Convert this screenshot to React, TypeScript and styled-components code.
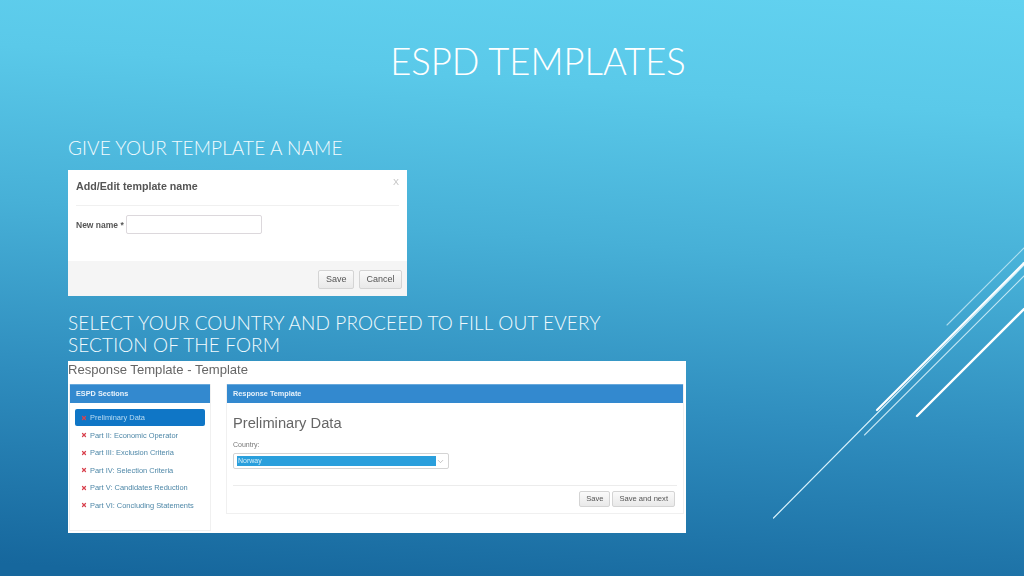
import React from "react";
import styled, { createGlobalStyle } from "styled-components";
import { ChevronDown, X } from "lucide-react";

const sections = [
  "Preliminary Data",
  "Part II: Economic Operator",
  "Part III: Exclusion Criteria",
  "Part IV: Selection Criteria",
  "Part V: Candidates Reduction",
  "Part VI: Concluding Statements",
];

const GlobalStyle = createGlobalStyle`
  html, body {
    margin: 0;
    padding: 0;
  }
  body {
    font-family: "Liberation Sans", Arial, sans-serif;
  }
`;

const Slide = styled.div`
  position: relative;
  width: 1024px;
  height: 576px;
  overflow: hidden;
  box-sizing: border-box;
  padding: 36px 16px 0 68px;
  background: linear-gradient(184deg, #62d2f0 0%, #5ac9e9 18%, #47b0d7 42%, #2f8dbe 68%, #16679d 98%);
`;

const Title = styled.h1`
  margin: 0;
  font-family: "Lato", "Open Sans", sans-serif;
  font-weight: 300;
  font-size: 36.4px;
  line-height: 50px;
  text-align: center;
  color: #fff;
`;

const Caption = styled.p`
  margin: 0;
  width: 560px;
  font-family: "Lato", "Open Sans", sans-serif;
  font-weight: 300;
  font-size: 19px;
  letter-spacing: 0.1px;
  line-height: 22px;
  color: #f2fbfe;
`;

const Content = styled.div`
  display: flex;
  flex-direction: column;
  align-items: flex-start;
  margin-top: 51px;
`;

const Dialog = styled.div`
  width: 339px;
  height: 126px;
  margin: 11px 0 16px;
  display: flex;
  flex-direction: column;
  background: #fff;
  color: #555;
  filter: blur(0.3px);
`;

const DialogHead = styled.div`
  display: flex;
  justify-content: space-between;
  height: 36px;
  margin: 0 8px;
  padding-top: 10px;
  box-sizing: border-box;
  border-bottom: 1px solid #f0f0f0;
  font-size: 10.7px;
  font-weight: 700;
  line-height: 13px;
`;

const CloseMark = styled.span`
  margin-top: -4px;
  font-size: 9px;
  font-weight: 400;
  color: #c4c4c4;
`;

const DialogBody = styled.div`
  flex: 1;
  display: flex;
  align-items: flex-start;
  gap: 2px;
  padding: 9px 8px 0;
  font-size: 8.5px;
  font-weight: 700;
  line-height: 21px;
`;

const TextField = styled.div`
  width: 134px;
  height: 17px;
  border: 1px solid #dcd8dc;
  border-radius: 2px;
`;

const DialogFoot = styled.div`
  height: 35px;
  box-sizing: border-box;
  display: flex;
  justify-content: flex-end;
  gap: 5px;
  padding: 9px 5px 0 0;
  background: #f5f5f5;
`;

const GreyButton = styled.div<{ $small?: boolean }>`
  height: ${(p) => (p.$small ? 16 : 19)}px;
  box-sizing: border-box;
  padding: 0 ${(p) => (p.$small ? 6 : 6.5)}px;
  border: 1px solid #d4d4d4;
  border-radius: 2px;
  background: linear-gradient(180deg, #fafafa, #e9e9e9);
  font-size: ${(p) => (p.$small ? 7.6 : 9)}px;
  line-height: ${(p) => (p.$small ? 14 : 17)}px;
  color: #555;
`;

const Form = styled.div`
  width: 618px;
  height: 172px;
  margin-top: 5px;
  background: #fff;
  filter: blur(0.3px);
`;

const FormTitle = styled.div`
  height: 23px;
  font-size: 13.1px;
  line-height: 17px;
  color: #666;
`;

const Columns = styled.div`
  display: grid;
  grid-template-columns: 142px 458px;
  gap: 15px;
  padding-left: 1px;
`;

const Panel = styled.div<{ $height: number }>`
  height: ${(p) => p.$height}px;
  box-sizing: border-box;
  border: 1px solid #f0f0f0;
  border-top: 0;
`;

const PanelHead = styled.div`
  height: 19px;
  box-sizing: border-box;
  padding-left: 6px;
  background: #3389cf;
  border-top: 1px solid #68a9dc;
  font-size: 7.3px;
  font-weight: 700;
  line-height: 17px;
  color: #e8f2fa;
`;

const SectionList = styled.div`
  display: flex;
  flex-direction: column;
  gap: 0.5px;
  padding: 6px 5px 0;
`;

const SectionItem = styled.div<{ $active?: boolean }>`
  display: flex;
  align-items: center;
  gap: 3px;
  height: 17px;
  padding-left: 6px;
  border-radius: 2px;
  background: ${(p) => (p.$active ? "#0f76c6" : "transparent")};
  font-size: 7.45px;
  color: ${(p) => (p.$active ? "#b9dcf3" : "#4f88a8")};
`;

const Mark = styled(X)`
  flex: none;
  color: #d9434f;
`;

const PanelBody = styled.div`
  padding: 11px 6px 0;
`;

const SectionTitle = styled.div`
  font-size: 14.7px;
  line-height: 19px;
  color: #666;
`;

const FieldLabel = styled.div`
  margin-top: 7px;
  font-size: 7px;
  line-height: 9px;
  color: #777;
`;

const SelectBox = styled.div`
  display: flex;
  align-items: center;
  width: 216px;
  height: 16px;
  margin-top: 4px;
  box-sizing: border-box;
  padding: 0 3px;
  border: 1px solid #d4d4d4;
  border-radius: 2px;
  color: #999;
`;

const SelectedValue = styled.div`
  flex: 1;
  height: 10px;
  padding-left: 1px;
  background: #2a9fdc;
  font-size: 7px;
  line-height: 10px;
  color: #d5eefa;
`;

const FormActions = styled.div`
  display: flex;
  justify-content: flex-end;
  gap: 2px;
  margin-top: 16px;
  padding: 5px 2px 0 0;
  border-top: 1px solid #ececec;
`;

const Decoration = styled.svg`
  position: absolute;
  inset: 0;
`;

const App: React.FC = () => (
  <Slide>
    <GlobalStyle />
    <Title>ESPD TEMPLATES</Title>
    <Content>
      <Caption>GIVE YOUR TEMPLATE A NAME</Caption>
      <Dialog>
        <DialogHead>
          Add/Edit template name
          <CloseMark>X</CloseMark>
        </DialogHead>
        <DialogBody>
          New name *
          <TextField />
        </DialogBody>
        <DialogFoot>
          <GreyButton>Save</GreyButton>
          <GreyButton>Cancel</GreyButton>
        </DialogFoot>
      </Dialog>
      <Caption>SELECT YOUR COUNTRY AND PROCEED TO FILL OUT EVERY SECTION OF THE FORM</Caption>
      <Form>
        <FormTitle>Response Template - Template</FormTitle>
        <Columns>
          <Panel $height={147}>
            <PanelHead>ESPD Sections</PanelHead>
            <SectionList>
              {sections.map((name, i) => (
                <SectionItem key={name} $active={i === 0}>
                  <Mark size={6} strokeWidth={5} />
                  {name}
                </SectionItem>
              ))}
            </SectionList>
          </Panel>
          <Panel $height={130}>
            <PanelHead>Response Template</PanelHead>
            <PanelBody>
              <SectionTitle>Preliminary Data</SectionTitle>
              <FieldLabel>Country:</FieldLabel>
              <SelectBox>
                <SelectedValue>Norway</SelectedValue>
                <ChevronDown size={9} strokeWidth={1.5} />
              </SelectBox>
              <FormActions>
                <GreyButton $small>Save</GreyButton>
                <GreyButton $small>Save and next</GreyButton>
              </FormActions>
            </PanelBody>
          </Panel>
        </Columns>
      </Form>
    </Content>
    <Decoration width="1024" height="576" viewBox="0 0 1024 576">
      <g stroke="#d8f2fb" strokeLinecap="round" fill="none">
        <line x1="773.5" y1="518" x2="1024" y2="265" strokeWidth="1.2" />
        <line x1="947" y1="325" x2="1024" y2="248" strokeWidth="1.1" opacity="0.7" />
        <line x1="864.5" y1="435" x2="1024" y2="276" strokeWidth="1.1" opacity="0.85" />
      </g>
      <g stroke="#fff" strokeLinecap="round" fill="none">
        <line x1="877" y1="410" x2="1024" y2="263" strokeWidth="2.2" />
        <line x1="917" y1="416" x2="1024" y2="309" strokeWidth="2.4" />
      </g>
    </Decoration>
  </Slide>
);

export default App;
